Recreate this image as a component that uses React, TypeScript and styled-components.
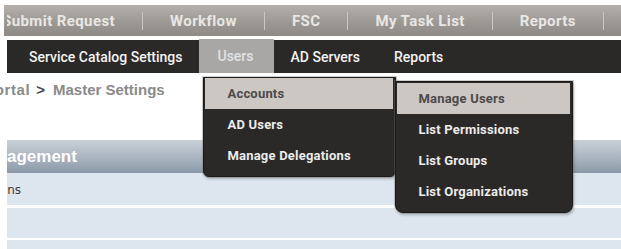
import React from "react";
import styled, { createGlobalStyle } from "styled-components";

const Global = createGlobalStyle`
  html, body { margin: 0; padding: 0; background: #ffffff; overflow: hidden; }
  body { width: 621px; height: 249px; font-family: "Liberation Sans", Arial, sans-serif; }
`;

const Page = styled.div`
  position: relative;
  width: 621px;
  height: 249px;
  overflow: hidden;
  padding-top: 5px;
  box-sizing: border-box;
  display: flex;
  flex-direction: column;
  & > * { flex: none; }
`;

const TopBar = styled.div`
  height: 31px;
  margin-left: 4px;
  display: flex;
  align-items: center;
  overflow: hidden;
  background: linear-gradient(#b4b1ad, #9a9793 60%, #8e8b87);
`;

const TopItem = styled.div`
  padding: 0 27px;
  font-family: Roboto, "Liberation Sans", sans-serif;
  font-weight: 700;
  font-size: 15px;
  color: #e9e7e4;
  letter-spacing: 0.4px;
  white-space: nowrap;
  flex: none;
`;

const FirstTopItem = styled(TopItem)`
  padding: 0;
  margin: 0 27px 0 3px;
  width: 108px;
  overflow: hidden;
  display: flex;
  justify-content: flex-end;
`;

const TopSep = styled.div`
  width: 1px;
  height: 18px;
  background: #cbc8c4;
  flex: none;
`;

const SubBar = styled.div`
  margin-top: 4px;
  height: 33px;
  margin-left: 7px;
  display: flex;
  align-items: stretch;
  background: #2b2927;
  padding-left: 5px;
`;

const SubItem = styled.div<{ $active?: boolean }>`
  position: relative;
  display: flex;
  align-items: center;
  padding: ${(p) => (p.$active ? "0 20px 0 18px" : "0 17px")};
  margin-top: ${(p) => (p.$active ? "-1px" : "0")};
  background: ${(p) => (p.$active ? "#a8a7a6" : "transparent")};
  font-family: Roboto, "Liberation Sans", sans-serif;
  font-weight: 500;
  font-size: 14px;
  color: ${(p) => (p.$active ? "#e2e2e2" : "#f2f2f2")};
  white-space: nowrap;
`;

const Breadcrumb = styled.div`
  margin-top: 8px;
  height: 18px;
  line-height: 18px;
  display: flex;
  font-weight: 700;
  font-size: 15px;
  color: #8a8a8a;
  white-space: nowrap;
`;

const CrumbPrefix = styled.div`
  width: 53px;
  overflow: hidden;
  display: flex;
  justify-content: flex-end;
  white-space: nowrap;
`;

const CrumbText = styled.span`
  letter-spacing: 0.6px;
`;

const Arrow = styled.span`
  color: #4a4a4a;
  margin: 0 8px 0 6px;
`;

const SectionHeader = styled.div`
  margin-top: 41px;
  margin-left: 7px;
  height: 33px;
  display: flex;
  align-items: center;
  background: linear-gradient(#c9d0d7, #a9b4bf 55%, #8a98a7);
  overflow: hidden;
`;

const HeaderText = styled.span`
  margin-left: -34px;
  font-weight: 700;
  font-size: 17px;
  color: #ffffff;
  white-space: nowrap;
`;

const Row = styled.div<{ $h: number; $gap: number }>`
  margin-left: 7px;
  margin-top: ${(p) => p.$gap}px;
  height: ${(p) => p.$h}px;
  background: #dde5ee;
  display: flex;
  align-items: center;
`;

const RowLabel = styled.div`
  width: 14px;
  overflow: hidden;
  display: flex;
  justify-content: flex-end;
  font-family: "DejaVu Sans", Verdana, sans-serif;
  font-size: 12px;
  color: #3a3a3a;
  white-space: nowrap;
  margin-top: 2px;
`;

const Menu = styled.div<{ $w: number; $radius: number }>`
  position: absolute;
  width: ${(p) => p.$w}px;
  box-sizing: border-box;
  background: #2b2927;
  border: 1px solid #1c1b1a;
  border-radius: 0 0 ${(p) => p.$radius}px ${(p) => p.$radius}px;
  box-shadow: 0 0 0 1px rgba(120, 120, 120, 0.35), 1px 2px 3px rgba(0, 0, 0, 0.25);
  display: flex;
  flex-direction: column;
  z-index: 5;
`;

const MainMenu = styled(Menu)`
  left: 4px;
  top: 38px;
  padding-bottom: 5px;
`;

const SubMenu = styled(Menu)`
  left: 190px;
  top: 3px;
  padding: 1px 0 5px;
`;

const MenuItem = styled.div<{ $hl?: boolean; $pad: number }>`
  position: relative;
  height: 31px;
  display: flex;
  align-items: center;
  padding-left: ${(p) => p.$pad}px;
  margin: 0 2px 0 1px;
  background: ${(p) => (p.$hl ? "#ccc7c3" : "transparent")};
  font-weight: 700;
  font-size: 13px;
  letter-spacing: 0.2px;
  color: ${(p) => (p.$hl ? "#4d4a4c" : "#ececec")};
  white-space: nowrap;
`;

export default function App() {
  return (
    <>
      <Global />
      <Page>
        <TopBar>
          <FirstTopItem>
            <span>Submit Request</span>
          </FirstTopItem>
          <TopSep />
          <TopItem>Workflow</TopItem>
          <TopSep />
          <TopItem>FSC</TopItem>
          <TopSep />
          <TopItem>My Task List</TopItem>
          <TopSep />
          <TopItem>Reports</TopItem>
          <TopSep />
        </TopBar>
        <SubBar>
          <SubItem>Service Catalog Settings</SubItem>
          <SubItem $active>
            Users
            <MainMenu $w={193} $radius={6}>
              <MenuItem $hl $pad={22}>
                Accounts
                <SubMenu $w={178} $radius={8}>
                  <MenuItem $hl $pad={21}>Manage Users</MenuItem>
                  <MenuItem $pad={21}>List Permissions</MenuItem>
                  <MenuItem $pad={21}>List Groups</MenuItem>
                  <MenuItem $pad={21}>List Organizations</MenuItem>
                </SubMenu>
              </MenuItem>
              <MenuItem $pad={22}>AD Users</MenuItem>
              <MenuItem $pad={22}>Manage Delegations</MenuItem>
            </MainMenu>
          </SubItem>
          <SubItem>AD Servers</SubItem>
          <SubItem>Reports</SubItem>
        </SubBar>
        <Breadcrumb>
          <CrumbPrefix>
            <CrumbText>Portal</CrumbText>
            <Arrow>&gt;</Arrow>
          </CrumbPrefix>
          Master Settings
        </Breadcrumb>
        <SectionHeader>
          <HeaderText>Management</HeaderText>
        </SectionHeader>
        <Row $h={32} $gap={0}>
          <RowLabel>Permissions</RowLabel>
        </Row>
        <Row $h={30} $gap={3} />
        <Row $h={20} $gap={2} />
      </Page>
    </>
  );
}
